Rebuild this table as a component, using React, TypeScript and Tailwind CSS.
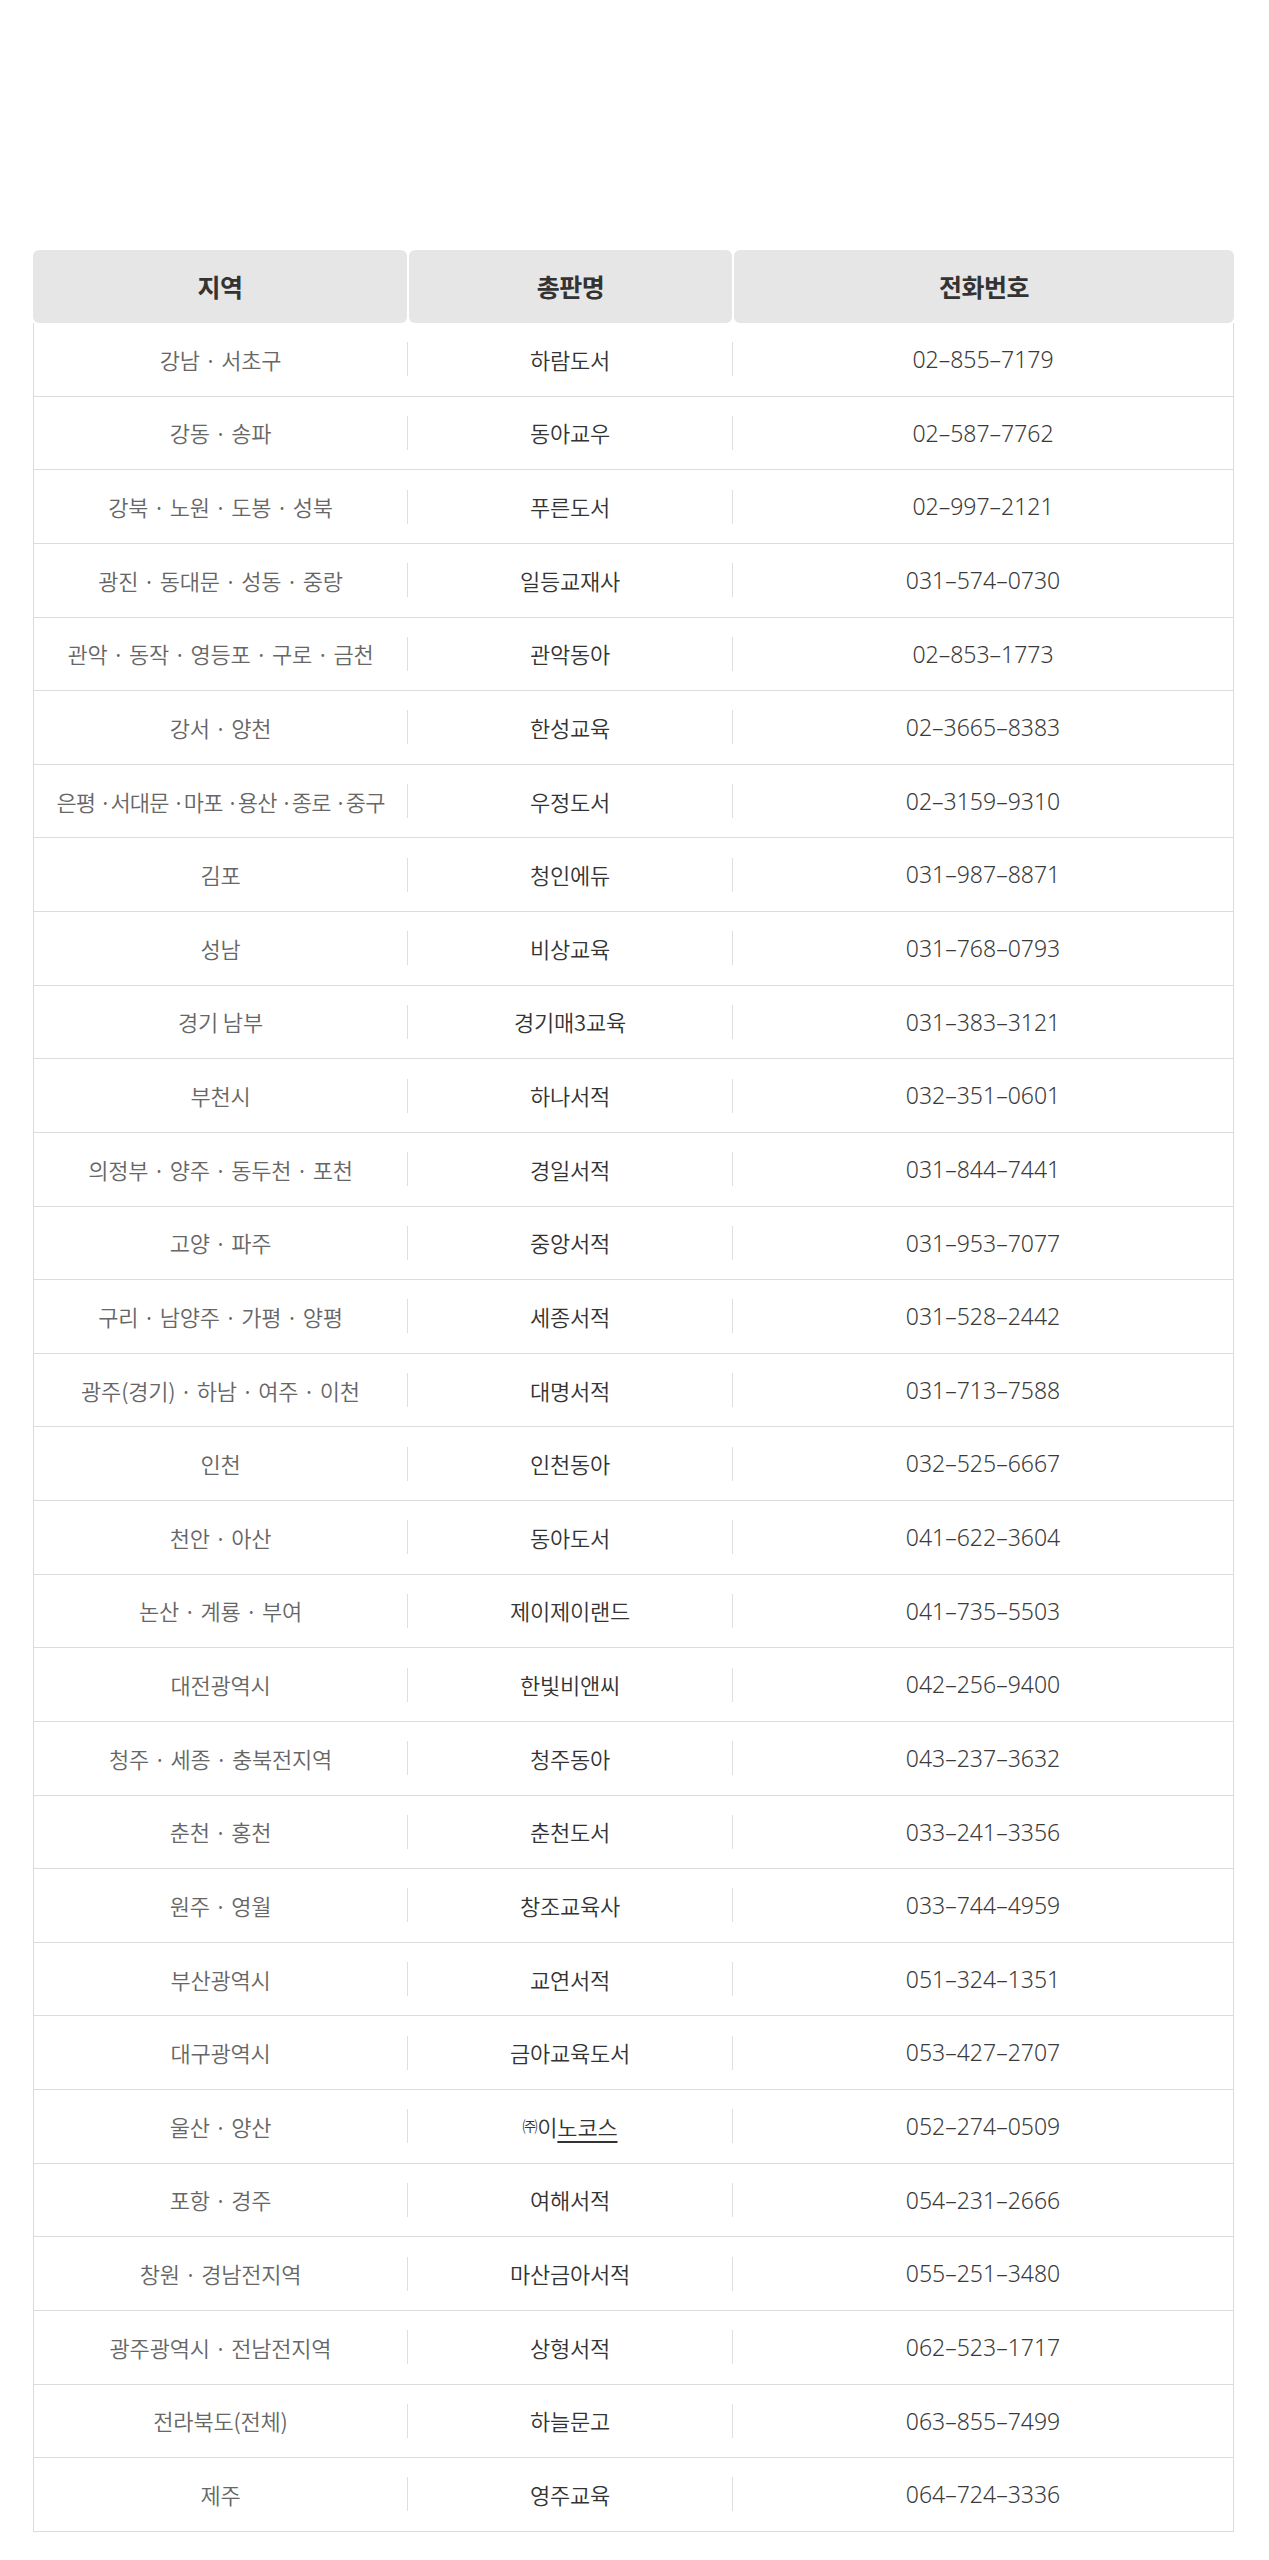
import React from 'react';

type Row = { region: string; name: React.ReactNode; tel: string; tight?: boolean };

const rows: Row[] = [
  { region: '강남 · 서초구', name: '하람도서', tel: '02–855–7179' },
  { region: '강동 · 송파', name: '동아교우', tel: '02–587–7762' },
  { region: '강북 · 노원 · 도봉 · 성북', name: '푸른도서', tel: '02–997–2121' },
  { region: '광진 · 동대문 · 성동 · 중랑', name: '일등교재사', tel: '031–574–0730' },
  { region: '관악 · 동작 · 영등포 · 구로 · 금천', name: '관악동아', tel: '02–853–1773' },
  { region: '강서 · 양천', name: '한성교육', tel: '02–3665–8383' },
  { region: '은평 ·서대문 ·마포 ·용산 ·종로 ·중구', name: '우정도서', tel: '02–3159–9310', tight: true },
  { region: '김포', name: '청인에듀', tel: '031–987–8871' },
  { region: '성남', name: '비상교육', tel: '031–768–0793' },
  { region: '경기 남부', name: '경기매3교육', tel: '031–383–3121' },
  { region: '부천시', name: '하나서적', tel: '032–351–0601' },
  { region: '의정부 · 양주 · 동두천 · 포천', name: '경일서적', tel: '031–844–7441' },
  { region: '고양 · 파주', name: '중앙서적', tel: '031–953–7077' },
  { region: '구리 · 남양주 · 가평 · 양평', name: '세종서적', tel: '031–528–2442' },
  { region: '광주(경기) · 하남 · 여주 · 이천', name: '대명서적', tel: '031–713–7588' },
  { region: '인천', name: '인천동아', tel: '032–525–6667' },
  { region: '천안 · 아산', name: '동아도서', tel: '041–622–3604' },
  { region: '논산 · 계룡 · 부여', name: '제이제이랜드', tel: '041–735–5503' },
  { region: '대전광역시', name: '한빛비앤씨', tel: '042–256–9400' },
  { region: '청주 · 세종 · 충북전지역', name: '청주동아', tel: '043–237–3632' },
  { region: '춘천 · 홍천', name: '춘천도서', tel: '033–241–3356' },
  { region: '원주 · 영월', name: '창조교육사', tel: '033–744–4959' },
  { region: '부산광역시', name: '교연서적', tel: '051–324–1351' },
  { region: '대구광역시', name: '금아교육도서', tel: '053–427–2707' },
  {
    region: '울산 · 양산',
    name: (
      <>
        <span className="text-[15px]">㈜</span>이<span className="underline underline-offset-[5px]">노코스</span>
      </>
    ),
    tel: '052–274–0509',
  },
  { region: '포항 · 경주', name: '여해서적', tel: '054–231–2666' },
  { region: '창원 · 경남전지역', name: '마산금아서적', tel: '055–251–3480' },
  { region: '광주광역시 · 전남전지역', name: '상형서적', tel: '062–523–1717' },
  { region: '전라북도(전체)', name: '하늘문고', tel: '063–855–7499' },
  { region: '제주', name: '영주교육', tel: '064–724–3336' },
];

const font = { fontFamily: '"Noto Sans CJK KR", "Noto Sans", sans-serif' };
const telFont = { fontFamily: '"Noto Sans", "Noto Sans CJK KR", sans-serif' };

export default function App() {
  return (
    <div className="min-h-[2560px] bg-white pt-[250px] pb-[28px]" style={font}>
      <div className="ml-[33px] w-[1201px]">
        {/* header */}
        <div className="grid grid-cols-[375px_325px_501px] h-[73px]">
          {['지역', '총판명', '전화번호'].map((h, i) => (
            <div
              key={h}
              className={`flex items-center justify-center bg-[#e6e6e6] rounded-[6px] text-[25px] font-bold text-[#333] tracking-[-0.5px] ${
                i === 0 ? 'mr-px' : i === 1 ? 'mx-px' : 'ml-px'
              }`}
            >
              {h}
            </div>
          ))}
        </div>

        {/* rows */}
        <div className="border-x border-[#dcdcdc]">
          {rows.map((r) => (
            <div
              key={r.tel}
              className="grid grid-cols-[374px_325px_500px] h-[73.63px] border-b border-[#dcdcdc] items-center"
            >
              <div
                className={`flex items-center justify-center h-[34px] border-r border-[#dedede] text-[22px] font-[350] text-[#666] whitespace-nowrap ${
                  r.tight ? 'tracking-[-0.9px]' : 'tracking-[-0.2px]'
                }`}
              >
                {r.region}
              </div>
              <div className="flex items-center justify-center h-[34px] border-r border-[#dedede] text-[22px] font-[350] text-[#333] tracking-[-0.2px]">
                {r.name}
              </div>
              <div className="flex items-center justify-center text-[23px] font-light text-[#3a3a3a]" style={telFont}>
                {r.tel}
              </div>
            </div>
          ))}
        </div>
      </div>
    </div>
  );
}
